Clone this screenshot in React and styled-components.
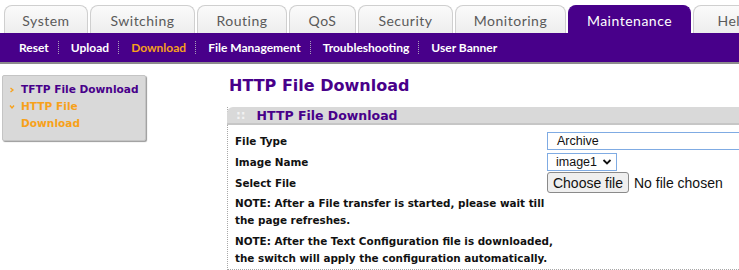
import React from 'react'
import styled, { createGlobalStyle } from 'styled-components'

const GlobalStyle = createGlobalStyle`
  html, body { margin: 0; padding: 0; background: #fff; }
  body { font-family: "DejaVu Sans", Verdana, sans-serif; overflow: hidden; }
`;

const PURPLE = '#48008a';
const ORANGE = '#f7a11a';

const tabs = [
  { name: 'System', w: 84 },
  { name: 'Switching', w: 105 },
  { name: 'Routing', w: 90 },
  { name: 'QoS', w: 67 },
  { name: 'Security', w: 95 },
  { name: 'Monitoring', w: 111 },
  { name: 'Maintenance', w: 123, active: true },
  { name: 'Help', w: 80 },
];

const subItems = ['Reset', 'Upload', 'Download', 'File Management', 'Troubleshooting', 'User Banner'];

function Chevron({ down }) {
  return (
    <svg width="6" height="6" viewBox="0 0 6 6">
      <path
        d={down ? 'M1 1.5 L3 4 L5 1.5' : 'M1.5 1 L4 3 L1.5 5'}
        fill="none"
        stroke={ORANGE}
        strokeWidth="1.3"
      />
    </svg>
  )
}

function App() {
  return (
    <Page>
      <GlobalStyle />
      <TabRow>
        {tabs.map((t) => (
          <Tab key={t.name} $w={t.w} $active={t.active}>{t.name}</Tab>
        ))}
      </TabRow>
      <SubNav>
        {subItems.map((s, i) => (
          <React.Fragment key={s}>
            {i > 0 && <Sep />}
            <SubItem $active={s === 'Download'}>{s}</SubItem>
          </React.Fragment>
        ))}
      </SubNav>
      <Body>
        <SideBox>
          <SideItem>
            <Arrow><Chevron /></Arrow>
            <span>TFTP File Download</span>
          </SideItem>
          <SideItem $active>
            <Arrow><Chevron down /></Arrow>
            <span>HTTP File<br />Download</span>
          </SideItem>
        </SideBox>
        <Main>
          <Heading>HTTP File Download</Heading>
          <Panel>
            <PanelHead>
              <Dots>::</Dots>
              <PanelTitle>HTTP File Download</PanelTitle>
            </PanelHead>
            <Rows>
              <Label>File Type</Label>
              <Value><TextBox>Archive</TextBox></Value>
              <Label>Image Name</Label>
              <Value>
                <Select>
                  image1
                  <svg width="10" height="8" viewBox="0 0 10 8">
                    <path d="M1.5 2 L5 5.5 L8.5 2" fill="none" stroke="#111" strokeWidth="1.8" />
                  </svg>
                </Select>
              </Value>
              <Label>Select File</Label>
              <Value>
                <FileButton type="button">Choose file</FileButton>
                <NoFile>No file chosen</NoFile>
              </Value>
              <Note>NOTE: After a File transfer is started, please wait till the page refreshes.</Note>
              <Note>NOTE: After the Text Configuration file is downloaded, the switch will apply the configuration automatically.</Note>
            </Rows>
          </Panel>
        </Main>
      </Body>
    </Page>
  )
}

const Page = styled.div`
  width: 739px;
  height: 270px;
  overflow: hidden;
`;

const TabRow = styled.div`
  display: flex;
  gap: 2px;
  padding: 5px 0 0 4px;
  height: 28px;
  white-space: nowrap;
`;

const Tab = styled.div`
  flex: 0 0 ${(p) => p.$w}px;
  height: 28px;
  box-sizing: border-box;
  border: 1px solid ${(p) => (p.$active ? PURPLE : '#cfcfcf')};
  border-bottom: none;
  border-radius: 8px 8px 0 0;
  background: ${(p) => (p.$active ? PURPLE : 'linear-gradient(#fbfbfb, #ededed)')};
  color: ${(p) => (p.$active ? '#fff' : '#5a5a5a')};
  font-family: Lato, "Open Sans", sans-serif;
  font-size: 14px;
  letter-spacing: 0.5px;
  display: flex;
  align-items: center;
  justify-content: center;
  padding-top: 1px;
`;

const SubNav = styled.div`
  height: 29px;
  background: ${PURPLE};
  border-bottom: 2px solid #8c8c8c;
  display: flex;
  align-items: center;
  padding-left: 19px;
`;

const SubItem = styled.span`
  font-family: Lato, "Open Sans", sans-serif;
  font-weight: 700;
  font-size: 12px;
  color: ${(p) => (p.$active ? ORANGE : '#fff')};
`;

const Sep = styled.span`
  width: 0;
  height: 13px;
  border-left: 1px dotted #a9a0b8;
  margin: 0 12px 0 9px;
`;

const Body = styled.div`
  display: flex;
  align-items: flex-start;
  padding-top: 11px;
`;

const SideBox = styled.div`
  flex: 0 0 144px;
  margin-left: 2px;
  box-sizing: border-box;
  background: #d9d9d9;
  border: 1px solid #c4c4c4;
  border-radius: 2px;
  box-shadow: 1px 1px 1px #9a9a9a;
  padding: 5px 0 8px 6px;
`;

const SideItem = styled.div`
  display: flex;
  font-size: 10.6px;
  font-weight: 700;
  line-height: 17px;
  color: ${(p) => (p.$active ? ORANGE : PURPLE)};
`;

const Arrow = styled.span`
  flex: 0 0 12px;
  height: 17px;
  display: flex;
  align-items: center;
`;

const Main = styled.div`
  margin-left: 81px;
  flex: 1;
  min-width: 0;
`;

const Heading = styled.h1`
  margin: 1px 0 0 2px;
  font-size: 16px;
  line-height: 20px;
  color: ${PURPLE};
  font-weight: 700;
`;

const Panel = styled.div`
  margin-top: 11px;
  border-left: 1px dotted #a8a8a8;
  border-bottom: 1px dotted #a8a8a8;
`;

const PanelHead = styled.div`
  height: 16px;
  background: #d9d9d9;
  border-radius: 6px 0 0 0;
  border-bottom: 2px solid #c6c6c6;
  display: flex;
  align-items: center;
  margin-left: -1px;
`;

const Dots = styled.span`
  color: #f2f2f2;
  font-weight: 700;
  font-size: 12px;
  margin: 0 11px 0 9px;
`;

const PanelTitle = styled.span`
  color: ${PURPLE};
  font-size: 12.5px;
  font-weight: 700;
`;

const Rows = styled.div`
  display: grid;
  grid-template-columns: 312px 1fr;
  grid-auto-rows: minmax(21px, auto);
  align-items: center;
  padding: 5px 0 0 7px;
`;

const Label = styled.div`
  font-size: 10.4px;
  font-weight: 700;
  color: #111;
`;

const Note = styled(Label)`
  grid-column: 1 / span 2;
  max-width: 320px;
  line-height: 17px;
  padding: 2px 0;
`;

const Value = styled.div`
  display: flex;
  align-items: center;
  font-family: "Liberation Sans", Arial, sans-serif;
`;

const TextBox = styled.div`
  width: 200px;
  height: 18px;
  box-sizing: border-box;
  border: 1px solid #7fabe3;
  font-size: 12.5px;
  padding-left: 9px;
  display: flex;
  align-items: center;
  color: #111;
`;

const Select = styled.div`
  height: 18px;
  box-sizing: border-box;
  border: 1px solid #7fabe3;
  font-size: 12.5px;
  padding: 0 4px 0 8px;
  display: flex;
  align-items: center;
  gap: 5px;
  color: #111;
`;

const FileButton = styled.button`
  height: 21px;
  width: 82px;
  padding: 0;
  border: 1px solid #8a8a8a;
  border-radius: 3px;
  background: #efefef;
  font-family: "Liberation Sans", Arial, sans-serif;
  font-size: 14px;
  color: #111;
`;

const NoFile = styled.span`
  font-size: 14px;
  margin-left: 5px;
  color: #111;
`;

export default App;
